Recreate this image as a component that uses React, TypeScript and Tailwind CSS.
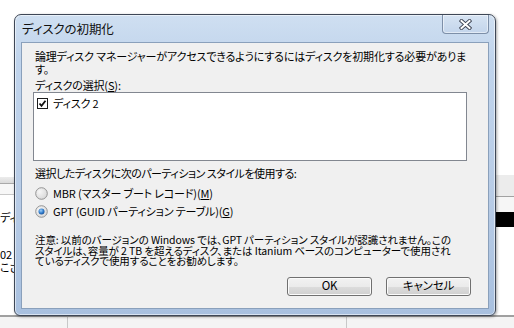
import React from "react";

const jp = "font-['Noto_Sans_CJK_JP','Noto_Sans',sans-serif] [font-feature-settings:'palt']";

function CheckBox() {
  return (
    <svg width="11" height="11" viewBox="0 0 11 11" className="shrink-0">
      <rect x="0.5" y="0.5" width="10" height="10" fill="#fff" stroke="#1c1c1c" />
      <path d="M2.5 5.5 L4.5 7.8 L8.5 2.8" fill="none" stroke="#111" strokeWidth="1.8" />
    </svg>
  );
}

function Radio({ checked }: { checked?: boolean }) {
  return (
    <svg width="13" height="13" viewBox="0 0 13 13" className="shrink-0">
      <defs>
        <radialGradient id="rg" cx="0.35" cy="0.35" r="0.8">
          <stop offset="0" stopColor="#f6f6f6" />
          <stop offset="1" stopColor="#d4d4d4" />
        </radialGradient>
        <radialGradient id="rb" cx="0.4" cy="0.35" r="0.7">
          <stop offset="0" stopColor="#9fd0fa" />
          <stop offset="0.6" stopColor="#2f7bcb" />
          <stop offset="1" stopColor="#1d4f91" />
        </radialGradient>
      </defs>
      <circle cx="6.5" cy="6.5" r="5.8" fill="url(#rg)" stroke="#8a8a8a" strokeWidth="0.9" />
      {checked && <circle cx="6.5" cy="6.5" r="3" fill="url(#rb)" />}
    </svg>
  );
}

function Win7Button({ children }: { children: React.ReactNode }) {
  return (
    <button className="w-[85px] h-[19px] rounded-[3px] border border-[#707070] bg-[linear-gradient(#f2f2f2,#ebebeb_50%,#dddddd_50%,#cfcfcf)] shadow-[inset_0_0_0_1px_#fbfbfb] text-[11.5px] leading-none text-black flex items-center justify-center">
      {children}
    </button>
  );
}

export default function App() {
  return (
    <div className={`relative w-[514px] h-[328px] overflow-hidden bg-white ${jp}`}>
      {/* background windows */}
      <div className="flex h-[315px]">
        <div className="w-[15px] flex flex-col overflow-hidden text-[11px]">
          <div className="h-[177px] bg-white" />
          <div className="h-[7px] bg-gradient-to-b from-[#ececec] to-[#dadada] border-b border-[#a9a9a9]" />
          <div className="h-[11px] bg-[#f7f7f7] border-b border-[#c9c9c9]" />
          <div className="pt-[16px] leading-[12px] whitespace-nowrap">ディ</div>
          <div className="pt-[25px] leading-[13px] whitespace-nowrap">02</div>
          <div className="leading-[13px] whitespace-nowrap">こさ</div>
        </div>
        <div className="flex-1" />
        <div className="w-[18px] flex flex-col">
          <div className="h-[175px] bg-white" />
          <div className="h-[22px] bg-[#ececec] border-b border-[#a2a2a2]" />
          <div className="h-[15px] bg-[#f6f6f6]" />
          <div className="h-[15px] bg-black" />
          <div className="flex-1 bg-white" />
        </div>
      </div>
      <div className="h-[13px] border-t-2 border-[#a0a0a0] bg-[#f4f4f4] flex">
        <div className="w-[68px] border-r border-[#c8c8c8]" />
        <div className="w-[279px] border-r border-[#c8c8c8]" />
      </div>

      {/* dialog */}
      <div className="absolute left-[14px] top-[14px] w-[482px] h-[302px] rounded-t-[7px] rounded-b-[6px] border border-[#3e4756] bg-[linear-gradient(#cfdff1,#c0d4ec_15%,#b8cce6_60%,#a8c0df)] shadow-[inset_0_0_0_1px_rgba(255,255,255,0.55),1px_1px_3px_rgba(0,0,0,0.35)] flex flex-col px-[6px] pb-[6px]">
        <div className="h-[27px] flex items-start justify-between">
          <span className="mt-[6px] ml-[1px] text-[12.5px] tracking-[-0.1px] leading-[16px] text-[#111]">ディスクの初期化</span>
          <div className="w-[47px] h-[19px] rounded-b-[4px] border border-t-0 border-[#7d8fa8] bg-[linear-gradient(#d7e4f3,#c3d5eb)] shadow-[inset_0_0_0_1px_rgba(255,255,255,0.5)] flex items-center justify-center">
            <svg width="13" height="11" viewBox="0 0 13 11">
              <path d="M2.5 2 L10.5 9 M10.5 2 L2.5 9" stroke="#3a4150" strokeWidth="3.8" strokeLinecap="square" />
              <path d="M2.5 2 L10.5 9 M10.5 2 L2.5 9" stroke="#ffffff" strokeWidth="2" strokeLinecap="square" />
            </svg>
          </div>
        </div>

        <div className="flex-1 border border-[#8aa0bb] bg-[#f0f0f0] pl-[11px] pt-[7px] flex flex-col text-black text-[11px] tracking-[-0.15px]">
          <p className="pl-[2px] leading-[13px] whitespace-nowrap">
            論理ディスク マネージャーがアクセスできるようにするにはディスクを初期化する必要がありま
            <br />
            す。
          </p>
          <p className="pl-[2px] mt-[3px] leading-[13px]">
            ディスクの選択(<span className="underline">S</span>):
          </p>
          <div className="w-[434px] h-[69px] border border-[#828790] bg-white pt-[4px] pl-[3px]">
            <div className="flex items-center gap-[5px] h-[13px] leading-[13px]">
              <CheckBox />
              <span>ディスク 2</span>
            </div>
          </div>
          <p className="pl-[2px] mt-[6px] leading-[13px] whitespace-nowrap tracking-[-0.5px]">
            選択したディスクに次のパーティション スタイルを使用する:
          </p>
          <div className="mt-[4px] pl-[2px] flex flex-col">
            <div className="h-[18px] flex items-center gap-[5px]">
              <Radio />
              <span>
                MBR (マスター ブート レコード)(<span className="underline">M</span>)
              </span>
            </div>
            <div className="h-[18px] flex items-center gap-[5px]">
              <Radio checked />
              <span>
                GPT (GUID パーティション テーブル)(<span className="underline">G</span>)
              </span>
            </div>
          </div>
          <p className="pl-[2px] mt-[15px] text-[10.5px] tracking-[-0.1px] leading-[10.5px] whitespace-nowrap">
            注意: 以前のバージョンの Windows では、GPT パーティション スタイルが認識されません。この
            <br />
            スタイルは、容量が 2 TB を超えるディスク、または Itanium ベースのコンピューターで使用され
            <br />
            ているディスクで使用することをお勧めします。
          </p>
          <div className="mt-[10px] pr-[17px] flex justify-end gap-[14px]">
            <Win7Button>OK</Win7Button>
            <Win7Button>キャンセル</Win7Button>
          </div>
        </div>
      </div>
    </div>
  );
}
